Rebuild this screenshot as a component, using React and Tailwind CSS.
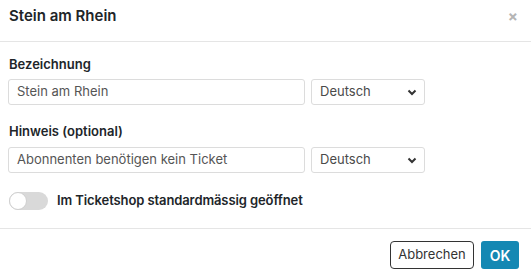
export default function App() {
  const Select = () => (
    <div className="w-[114px] h-[26px] border border-[#dcdcdc] rounded-[3px] bg-white flex items-center justify-between pl-[8px] pr-[7px] text-[13px] text-[#4a4a4a]">
      <span>Deutsch</span>
      <svg width="10" height="7" viewBox="0 0 10 7">
        <path d="M1.5 1.5 L5 5 L8.5 1.5" fill="none" stroke="#333" strokeWidth="2" />
      </svg>
    </div>
  );
  return (
    <div className="w-[531px] h-[280px] bg-white flex flex-col text-[#212529]" style={{ fontFamily: "Inter, 'Noto Sans', sans-serif" }}>
      <div className="h-[42px] border-b border-[#e5e5e5] flex items-start justify-between pl-[9px] pr-[13px] pt-[7px]">
        <div className="text-[15px] leading-[18px] font-semibold">Stein am Rhein</div>
        <div className="text-[15px] leading-[18px] font-bold text-[#b5b5b5] mt-[1px]">×</div>
      </div>
      <div className="flex-1 pl-[8px] pt-[14px] flex flex-col">
        <div className="text-[13px] leading-[16px] font-semibold mb-[7px] pl-[1px]">Bezeichnung</div>
        <div className="flex gap-[6px]">
          <div className="w-[297px] h-[26px] border border-[#dcdcdc] rounded-[3px] flex items-center pl-[8px] text-[13px] text-[#555]">Stein am Rhein</div>
          <Select />
        </div>
        <div className="text-[13px] leading-[16px] font-semibold mt-[18px] mb-[8px] pl-[1px]">Hinweis (optional)</div>
        <div className="flex gap-[6px]">
          <div className="w-[297px] h-[26px] border border-[#dcdcdc] rounded-[3px] flex items-center pl-[8px] text-[13px] text-[#555]">Abonnenten benötigen kein Ticket</div>
          <Select />
        </div>
        <div className="flex items-center mt-[18px] pl-[1px]">
          <div className="w-[39px] h-[18px] rounded-full bg-[#d9d9d9] relative">
            <div className="absolute left-0 top-0 w-[18px] h-[18px] rounded-full bg-white border border-[#cfcfcf]"></div>
          </div>
          <div className="ml-[9px] text-[13px] font-semibold tracking-[-0.1px]">Im Ticketshop standardmässig geöffnet</div>
        </div>
      </div>
      <div className="h-[52px] border-t border-[#e5e5e5] flex items-start justify-end pr-[12px] pt-[12px] gap-[7px]">
        <div className="w-[84px] h-[28px] border border-[#333] rounded-[4px] flex items-center justify-center text-[13px] text-[#333]">Abbrechen</div>
        <div className="w-[38px] h-[28px] rounded-[3px] bg-[#1588b3] flex items-center justify-center text-[14px] font-semibold text-white">OK</div>
      </div>
    </div>
  );
}
